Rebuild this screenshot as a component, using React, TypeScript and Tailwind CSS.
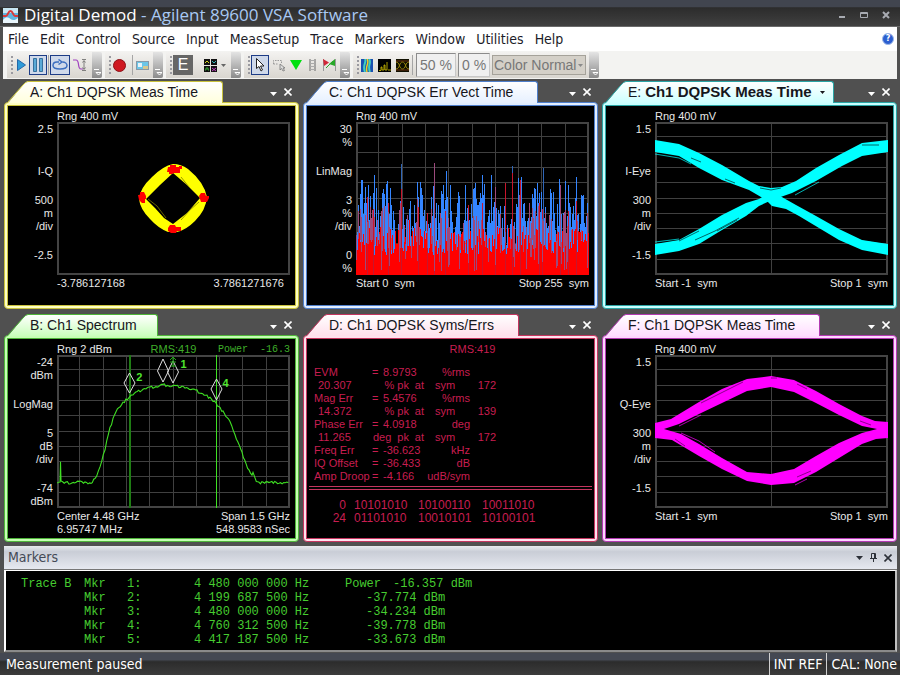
import clsx from "clsx";
import type { ReactNode } from "react";

const UI_FONT = "font-['DejaVu_Sans_Condensed','DejaVu_Sans',sans-serif]";
const PLOT_W = 233;
const PLOT_H = 153;

type Theme = { name: string; border: string; fill: string; tab: string; stroke: string; slope: string };

const themes: Record<string, Theme> = {
  yellow: { name: "yellow", border: "border-[#c9c23c]", fill: "bg-[#ffffc4]", tab: "from-white to-[#ffffdc]", stroke: "#d8d24a", slope: "#ffffdc" },
  blue: { name: "blue", border: "border-[#4f7fcb]", fill: "bg-[#e2eeff]", tab: "from-white to-[#e6f0ff]", stroke: "#4f7fcb", slope: "#e6f0ff" },
  cyan: { name: "cyan", border: "border-[#2aa5a5]", fill: "bg-[#c9ffff]", tab: "from-white to-[#ccffff]", stroke: "#2aa5a5", slope: "#ccffff" },
  green: { name: "green", border: "border-[#4fb53a]", fill: "bg-[#c6ffb4]", tab: "from-white to-[#c9ffbb]", stroke: "#4fb53a", slope: "#c9ffbb" },
  red: { name: "red", border: "border-[#c4355f]", fill: "bg-[#ffe2ee]", tab: "from-white to-[#ffe0ec]", stroke: "#c4355f", slope: "#ffe0ec" },
  magenta: { name: "magenta", border: "border-[#b23ab2]", fill: "bg-[#ffd6ff]", tab: "from-white to-[#ffdcff]", stroke: "#b23ab2", slope: "#ffdcff" },
};

/* ---------- trace panels ---------- */

const DownArrow = ({ className }: { className?: string }) => (
  <svg viewBox="0 0 7 4" className={clsx("h-[4px] w-[7px]", className)} fill="currentColor">
    <path d="M0 0h7L3.5 4z" />
  </svg>
);

const Cross = () => (
  <svg viewBox="0 0 8 8" className="size-2" stroke="currentColor" strokeWidth="1.6">
    <path d="M.5.5l7 7M7.5.5l-7 7" />
  </svg>
);

type PanelProps = { theme: Theme; title: ReactNode; label: string; pad?: string; children: ReactNode };

const Panel = ({ theme, title, label, pad = "pr-6", children }: PanelProps) => (
  <section aria-label={label} className="flex min-w-0 flex-col">
    <header className="flex h-[21px] items-start">
      <div className="relative z-10 flex h-[22px] pl-1">
        <svg viewBox="0 0 20 22" className="h-[22px] w-5">
          <linearGradient id={`slope-${theme.name}`} x1="0" x2="0" y1="0" y2="1">
            <stop offset="0" stopColor="#fff" />
            <stop offset="1" stopColor={theme.slope} />
          </linearGradient>
          <path d="M0 22L15 4Q18 .5 20 .5V22z" fill={`url(#slope-${theme.name})`} />
          <path d="M0 21L15 4Q18 .5 20 .5" fill="none" stroke={theme.stroke} />
        </svg>
        <h2 className={clsx("flex items-center gap-2 whitespace-nowrap rounded-tr-[3px] border-t border-r bg-linear-to-b pl-[2px] text-[14px] text-[#16161c]", pad, theme.border, theme.tab)}>
          {title}
        </h2>
      </div>
      <div className="ml-auto flex items-center gap-[7px] pt-[7px] pr-[7px] text-white">
        <button aria-label="Trace menu" className="pt-[4px]">
          <DownArrow />
        </button>
        <button aria-label="Close trace">
          <Cross />
        </button>
      </div>
    </header>
    <div className={clsx("flex-1 rounded-[4px] border p-[2px]", theme.border, theme.fill)}>
      <div className={clsx("h-full min-h-[201px] border bg-black", theme.border)}>{children}</div>
    </div>
  </section>
);

type PlotProps = {
  range: string;
  mid?: ReactNode;
  right?: ReactNode;
  axis: string[][];
  cols: number;
  rows: number;
  footer: [string, string][];
  overlay?: ReactNode;
  children: ReactNode;
};

const Plot = ({ range, mid, right, axis, cols, rows, footer, overlay, children }: PlotProps) => (
  <div className="grid grid-cols-[47px_1fr] gap-x-[2px] pr-[5px] text-[11px] leading-[13px] text-[#e8e8e8]">
    <div className="col-start-2 grid h-4 grid-cols-3 items-center pt-1 whitespace-nowrap">
      <span>{range}</span>
      <span className="text-center text-[#3fae2a]">{mid}</span>
      <span className="text-right font-['Liberation_Mono',monospace] text-[10px] text-[#3fae2a]">{right}</span>
    </div>
    <div className="col-start-1 flex h-[153px] flex-col justify-between pt-px pr-[2px] text-right">
      {axis.map((group, i) => (
        <div key={i} className={i === 0 || i === 3 ? "h-[26px]" : ""}>
          {group.map((line) => (
            <div key={line}>{line}</div>
          ))}
        </div>
      ))}
    </div>
    <div className="relative h-[153px]">
      <svg viewBox={`0 0 ${PLOT_W} ${PLOT_H}`} preserveAspectRatio="none" className="h-full w-full">
        <g stroke="#404040" shapeRendering="crispEdges">
          {Array.from({ length: cols - 1 }, (_, i) => {
            const x = Math.round((PLOT_W / cols) * (i + 1)) - 0.5;
            return <line key={i} x1={x} x2={x} y1="1" y2={PLOT_H - 1} />;
          })}
          {Array.from({ length: rows - 1 }, (_, i) => {
            const y = Math.round((PLOT_H / rows) * (i + 1)) - 0.5;
            return <line key={i} x1="1" x2={PLOT_W - 1} y1={y} y2={y} />;
          })}
        </g>
        <rect x="1" y="1" width={PLOT_W - 2} height={PLOT_H - 2} fill="none" stroke="#444" strokeWidth="2" />
        {children}
      </svg>
      {overlay}
    </div>
    <div className="col-start-2 pt-[2px]">
      {footer.map(([l, r]) => (
        <div key={l} className="flex justify-between whitespace-pre">
          <span>{l}</span>
          <span>{r}</span>
        </div>
      ))}
    </div>
  </div>
);

/* ---------- traces ---------- */

const Constellation = () => (
  <>
    <path
      fill="#ffff00"
      fillRule="evenodd"
      d="M116 42Q124 42 131 47Q147 60 150 75Q149 88 138 99Q129 108 120 110L111 110Q101 106 93 97Q83 87 82 77Q83 66 95 55Q106 44 116 42zM116 51L103 63 89 77 98 86 107 96 116 102 130 91 143 76 130 63z"
    />
    <g fill="none" stroke="#807c00" strokeWidth=".8">
      <path d="M124 55L132 65 141 74M91 77L100 84 109 96M124 98L133 88 142 80" />
    </g>
    <g fill="#ff0000">
      <path d="M111 45h2v-2h6v2h3v-1h3v3h-2v4h-6l-2 1h-3v-2h-2z" />
      <path d="M81 73h2v-3h4l2 4v3h-1v4h-3l-3-3z" />
      <path d="M142 74l2-3h4l1 3h3v2l-2 4h-6l-1-3z" />
      <path d="M111 106l2-3h5l1 2h5v4h-4l-1 2h-5l-3-2z" />
    </g>
  </>
);

// Tallest samples, [x, height]; everything between them is low-level noise.
const bluePeaks: [number, number][] = [
  [6, 95], [9, 88], [12, 90], [18, 100], [27, 86], [31, 94], [34, 87], [45, 111], [61, 93], [64, 93], [78, 112], [87, 90],
  [90, 104], [94, 90], [102, 83], [109, 90], [117, 86], [126, 100], [135, 100], [139, 88], [156, 109], [162, 97], [165, 98],
  [178, 87], [181, 92], [187, 107], [195, 82], [203, 96], [204, 90], [209, 94], [212, 90], [220, 98], [225, 80], [227, 80],
];
const redPeaks: [number, number][] = [
  [11, 78], [17, 66], [32, 72], [45, 86], [62, 68], [78, 87], [89, 64], [112, 70], [126, 72], [139, 87], [149, 92], [156, 102],
  [164, 95], [183, 72], [186, 66], [204, 68], [212, 64], [220, 74], [71, 62], [53, 55],
];

const noise = (() => {
  let seed = 89600;
  const rand = () => {
    seed = (seed * 1103515245 + 12345) % 2147483648;
    return seed / 2147483648;
  };
  const blue = new Map(bluePeaks);
  const red = new Map(redPeaks);
  return Array.from({ length: PLOT_W }, (_, x) => {
    const near = bluePeaks.some(([px]) => Math.abs(px - x) < 3) ? 16 : 0;
    const swell = 6 * Math.sin(x / 9) + 5 * Math.sin(x / 3.7) + near;
    const b = blue.get(x) ?? 30 + swell + rand() * 42;
    const r = red.get(x) ?? 20 + rand() * 28;
    const mixed = rand() < 0.4;
    return { x, b, r, p: mixed ? Math.min(b, r + 8 + rand() * 30) : 0, d: rand() < 0.25 ? 3 + rand() * 16 : 22 + rand() * 14 };
  });
})();

const ErrorVector = () => (
  <g shapeRendering="crispEdges">
    {noise.map(({ x, b, r, p, d }) => (
      <g key={x}>
        <rect x={x} y={PLOT_H - b} width="1" height={b} fill={b > 104 ? "#2f66b8" : "#3485ff"} />
        <rect x={x} y={PLOT_H - r} width="1" height={r} fill={r > 60 ? "#c8152c" : "#ff0000"} />
        {p > 0 && <rect x={x} y={PLOT_H - p} width="1" height={Math.max(p - d, 1)} fill="#9c4a7c" />}
      </g>
    ))}
  </g>
);

const IEye = () => (
  <>
    <g fill="#00ffff">
      <path d="M0 18L24 22 44 31 67 43 94 59 106 65 118 70 141 83 161 94 184 107 207 118 233 122V133L207 128 184 118 164 106 144 94 131 87 117 84 111 78 94 68 67 58 44 46 24 34 0 30z" />
      <path d="M0 122L24 118 44 107 67 93 91 81 104 77 116 70 127 65 141 59 161 46 184 33 207 21 233 18V30L207 34 187 44 161 59 137 71 117 78 104 84 91 94 67 108 44 122 24 129 0 133z" />
      <path d="M104 64L116 66 127 65 120 76 111 76z" />
    </g>
    <g fill="none" stroke="#003c3c" strokeWidth=".8">
      <path d="M105 66L116 68 126 66M36 36l10 4M70 57l10 4M40 118L60 109 84 96M62 109L82 98M24 119L44 109M207 23h17" />
    </g>
    <path d="M0 32L24 36 36 42M0 120L24 117M207 119L233 123M140 73L164 60" fill="none" stroke="#00ffff" strokeWidth=".7" />
  </>
);

const QEye = () => (
  <>
    <path
      fill="#ff00ff"
      fillRule="evenodd"
      d="M0 68L16 64 44 47 67 34 92 24 116 21 139 25 161 36 184 49 207 61 220 66 233 67V83L221 84 207 89 184 103 161 117 139 128 116 130 92 126 67 114 44 101 17 85 0 83zM9 74L24 69 44 59 67 48 92 36 116 32 139 37 161 48 184 60 207 71 222 74 207 78 184 88 161 101 139 114 116 119 92 117 67 103 44 89 26 79z"
    />
    <g fill="none" stroke="#5a005a" strokeWidth=".7">
      <path d="M46 48L70 36 88 27M142 29L152 34M205 66L216 70M142 122L156 116M20 84L30 91M116 23h6" />
    </g>
    <path d="M26 78L44 86 60 97M24 71L46 60M140 130L152 124" fill="none" stroke="#ff00ff" strokeWidth=".7" />
  </>
);

// Key points of the spectrum, filled in with ripple between them.
const spectrumKeys: [number, number][] = [
  [0, 128], [3, 126], [3.5, 107], [4, 127], [12, 128], [22, 127], [34, 128], [38, 124], [43, 113], [48, 94], [53, 73],
  [59, 56], [66, 48], [73, 41], [86, 34], [96, 32], [106, 30], [116, 31], [128, 32], [140, 36], [150, 41], [159, 48],
  [166, 57], [173, 66], [178, 80], [185, 98], [192, 116], [195, 121], [196, 117], [198, 124], [202, 128], [212, 127],
  [222, 128], [233, 127],
];

const spectrum = (() => {
  const ripple = [0, 0.8, -0.9, 0.3, -0.6, 1, -0.2, -1.1, 0.6, 1.2, -0.4];
  const pts: string[] = [];
  spectrumKeys.slice(1).forEach(([x1, y1], i) => {
    const [x0, y0] = spectrumKeys[i];
    const steps = Math.max(1, Math.round((x1 - x0) / 1.5));
    for (let s = 0; s < steps; s++) {
      const x = x0 + ((x1 - x0) * s) / steps;
      const y = y0 + ((y1 - y0) * s) / steps + ripple[Math.round(x * 1.7) % ripple.length];
      pts.push(`${x.toFixed(1)},${y.toFixed(1)}`);
    }
  });
  return pts.join(" ");
})();

const Spectrum = () => (
  <>
    <g shapeRendering="crispEdges">
      <path d="M73 0V153" stroke="#1f7d14" strokeWidth="2" />
      <path d="M159.5 0V153" stroke="#3fe023" />
    </g>
    <polyline points={spectrum} fill="none" stroke="#3fe023" strokeWidth="1.1" />
    <g fill="none" stroke="#e0e0e0">
      <path d="M72.500 18L78 28 72.500 38 67 28z" />
      <path d="M106 4L111.500 16 106 27 100.500 16z" />
      <path d="M116 6L121.500 17 116 28 110.500 17z" />
      <path d="M159.500 24L165 34 159.500 45 154 34z" />
    </g>
    <path d="M116 12V2M113 5L116 2 119 5M113 7h6M114 11h5" fill="none" stroke="#22a516" />
  </>
);

const SpectrumLabels = () => (
  <div className="font-bold text-[#4fe62e]">
    <span className="absolute top-[3px] left-[53%]">1</span>
    <span className="absolute top-[16px] left-[34%]">2</span>
    <span className="absolute top-[22px] left-[71%]">4</span>
  </div>
);

/* ---------- symbols / errors ---------- */

const errorRows = [
  ["EVM", "8.9793", "%rms", "20.307", "% pk", "172"],
  ["Mag Err", "5.4576", "%rms", "14.372", "% pk", "139"],
  ["Phase Err", "4.0918", "deg", "11.265", "deg  pk", "172"],
  ["Freq Err", "-36.623", "kHz"],
  ["IQ Offset", "-36.433", "dB"],
  ["Amp Droop", "-4.166", "udB/sym"],
];

const SymsErrs = () => (
  <div className="text-[11px] leading-[13px] text-[#c81e50]">
    <div className="h-4 pt-1 pl-11 text-center">RMS:419</div>
    <table className="mt-[11px] ml-[7px] w-[182px] table-fixed whitespace-pre">
      <colgroup>
        <col className="w-[58px]" />
        <col className="w-[11px]" />
        <col className="w-[26px]" />
        <col className="w-[15px]" />
        <col className="w-[46px]" />
        <col className="w-[26px]" />
      </colgroup>
      <tbody>
        {errorRows.flatMap(([name, value, unit, peak, peakUnit, sym]) => [
          <tr key={name}>
            <th scope="row" className="p-0 text-left font-normal">{name}</th>
            <td className="p-0">=</td>
            <td colSpan={2} className="p-0">{value}</td>
            <td className="p-0 text-right">{unit}</td>
            <td />
          </tr>,
          peak && (
            <tr key={name + "-peak"}>
              <td className="p-0 pl-1">{peak}</td>
              <td colSpan={2} className="p-0 text-right">{peakUnit}</td>
              <td className="p-0 text-right">at</td>
              <td className="p-0 pl-[11px]">sym</td>
              <td className="p-0 text-right">{sym}</td>
            </tr>
          ),
        ])}
      </tbody>
    </table>
    <div className="mx-[2px] mt-[3px] h-[4px] border-y border-[#c4355f]" />
    <table className="mt-[9px] ml-[20px] text-[12px] leading-[13px]">
      <tbody>
        {["0 10101010 10100110 10011010", "24 01101010 10010101 10100101"].map((row) => (
          <tr key={row}>
            {row.split(" ").map((word, i) => (
              <td key={word} className={i === 0 ? "w-[27px] p-0 pr-2 text-right" : "w-16 min-w-16 p-0"}>
                {word}
              </td>
            ))}
          </tr>
        ))}
      </tbody>
    </table>
  </div>
);

/* ---------- toolbar ---------- */

const ToolGroup = ({ label, children }: { label: string; children: ReactNode }) => (
  <div role="group" aria-label={label} className="flex h-[26px] items-stretch rounded-r-[2px] bg-linear-to-b from-[#f3f2f0] to-[#d9d6d0]">
    <div className="my-1 mr-px ml-1 w-[2px] border-l-2 border-dotted border-[#9a9aa0]" />
    <div className="flex items-center">{children}</div>
    <button aria-label={`${label} options`} className="ml-[3px] flex w-[10px] items-end justify-center rounded-r-[2px] bg-linear-to-b from-[#e4e4e4] to-[#8c8c8c] pb-[2px] text-white">
      <svg viewBox="0 0 8 7" className="h-[7px] w-2" stroke="currentColor" fill="none">
        <path d="M1 .5h5M3 3.500h5L5.500 6z" />
      </svg>
    </button>
  </div>
);

const ToolButton = ({ label, on, className, children }: { label: string; on?: boolean; className?: string; children: ReactNode }) => (
  <button
    aria-label={label}
    className={clsx("flex h-5 items-center justify-center", on && "border border-[#1d3c86] bg-[#cfd9ea]", className)}>
    {children}
  </button>
);

const Separator = () => <div className="mx-[1px] h-5 w-px bg-[#a5a5a5]" />;

const Toolbar = () => (
  <div className="flex h-7 items-center gap-[3px] bg-[#f3f3f1] pl-1">
    <ToolGroup label="Measurement">
      <ToolButton label="Run" className="w-[15px]">
        <svg viewBox="0 0 9 12" className="h-3 w-[9px]">
          <path d="M.5.5L8.500 6 .5 11.500z" fill="#2f9bd8" stroke="#2468a8" />
        </svg>
      </ToolButton>
      <ToolButton label="Pause" on className="w-[18px]">
        <svg viewBox="0 0 10 14" className="h-[14px] w-[10px]" fill="#5aa9d6" stroke="#1e5c8c" strokeWidth=".8">
          <path d="M.5.5h3v13h-3zM6.500.5h3v13h-3z" />
        </svg>
      </ToolButton>
      <Separator />
      <ToolButton label="Single" on className="w-5">
        <svg viewBox="0 0 16 12" className="h-3 w-4" fill="none" stroke="#3d6fc0" strokeWidth="1.500">
          <path d="M7 3H5C2.500 3 1 4.500 1 6.500S3 10 8 10s7-1.500 7-3.500S13 3 10.500 3" />
          <path d="M6.500.5L10 3 6.500 5.500" />
        </svg>
      </ToolButton>
      <ToolButton label="Trigger" className="w-[19px]">
        <svg viewBox="0 0 14 14" className="size-[14px]" fill="none">
          <path d="M0 2h3c4 0 1 9 5 9h2" stroke="#a040c0" strokeWidth="1.200" />
          <path d="M9 1.500h4M9 12.500h4M11 3v8M9.500 4.500L11 2.500l1.500 2M9.500 9.500l1.500 2 1.500-2" stroke="#666" strokeWidth=".8" />
        </svg>
      </ToolButton>
    </ToolGroup>
    <ToolGroup label="Recording">
      <ToolButton label="Record" className="w-[15px]">
        <span className="size-[13px] rounded-full border border-[#8c1016] bg-[#cf1820]" />
      </ToolButton>
      <span className="w-1" />
      <Separator />
      <ToolButton label="Player" className="w-4">
        <svg viewBox="0 0 13 9" className="h-[9px] w-[13px]">
          <rect x=".5" y=".5" width="12" height="8" fill="#6cc6e8" stroke="#8899a8" />
          <rect x="2" y="2" width="4" height="4" fill="#e8f4fa" />
          <rect x="7" y="5" width="5" height="3" fill="#d8c890" />
        </svg>
      </ToolButton>
    </ToolGroup>
    <ToolGroup label="Traces">
      <ToolButton label="Equalizer" className="mr-2 w-5 bg-[#666] text-[16px] text-white">
        E
      </ToolButton>
      <ToolButton label="Layout" className="w-[27px] gap-1 text-[#666]">
        <svg viewBox="0 0 13 13" className="size-[13px] shrink-0">
          <path d="M0 0h6v6H0zM7 0h6v6H7zM0 7h6v6H0zM7 7h6v6H7z" fill="#111" />
          <path d="M1 4l2-2 2 2" stroke="#d8d820" fill="none" />
          <path d="M8 2l2 2 2-2" stroke="#2fb6b6" fill="none" />
          <path d="M1 11h1V9h2v2h1" stroke="#35b035" fill="none" />
          <path d="M8 9l4 3M12 9l-4 3" stroke="#c040c0" fill="none" />
        </svg>
        <svg viewBox="0 0 5 3" className="h-[3px] w-[5px] shrink-0" fill="currentColor">
          <path d="M0 0h5L2.500 3z" />
        </svg>
      </ToolButton>
    </ToolGroup>
    <ToolGroup label="Cursor">
      <ToolButton label="Pointer" on className="w-[18px]">
        <svg viewBox="0 0 9 14" className="h-[14px] w-[9px]" fill="#fff" stroke="#222">
          <path d="M.5.5v10L3 8.500l2 4.500 1.500-1L4.500 8H8z" />
        </svg>
      </ToolButton>
      <ToolButton label="Area select" className="w-5">
        <svg viewBox="0 0 13 13" className="size-[13px]" fill="none">
          <path d="M.5 5V1.500h8V5M.5 5h5" stroke="#999" strokeDasharray="1.500 1" />
          <path d="M7 5v6l1.500-1.500L10 12l1.500-.5L10 9h2z" fill="#ddd" stroke="#777" strokeWidth=".8" />
        </svg>
      </ToolButton>
      <ToolButton label="Marker" className="w-[14px]">
        <svg viewBox="0 0 12 10" className="h-[10px] w-3">
          <path d="M0 0h12L6 10z" fill="#00e010" />
        </svg>
      </ToolButton>
      <ToolButton label="Band" className="w-[18px]">
        <svg viewBox="0 0 7 12" className="h-3 w-[7px]" fill="none" stroke="#666">
          <path d="M1 0v12M6 0v12" />
          <path d="M1 1.500h5M1 4.500h5M1 7.500h5M1 10.500h5" stroke="#aaa" />
        </svg>
      </ToolButton>
      <ToolButton label="Offset" className="w-4">
        <svg viewBox="0 0 13 12" className="h-3 w-[13px]">
          <path d="M.5 0v12M12.500 0v12" stroke="#999" />
          <path d="M0 0l6 3.500L1 7z" fill="#d02838" />
          <path d="M12 0v7L6 5z" fill="#28a828" />
          <path d="M3 9l7-7" stroke="#28a828" />
        </svg>
      </ToolButton>
    </ToolGroup>
    <ToolGroup label="Display">
      <ToolButton label="Spectrogram" className="w-[13px]">
        <svg viewBox="0 0 12 13" className="h-[13px] w-3" fill="none">
          <path d="M0 0h12v13H0z" fill="#1a50b0" />
          <path d="M4 0c2 4-3 5 0 13M8 0c3 4-2 6 1 13" stroke="#40d0c0" strokeWidth="2" />
          <path d="M6 0c3 4-2 6 0 13" stroke="#f0d020" strokeWidth="1.500" />
        </svg>
      </ToolButton>
      <ToolButton label="Persistence" className="w-[22px]">
        <svg viewBox="0 0 13 13" className="size-[13px]" fill="none" stroke="#d8c800">
          <path d="M0 0h13v13H0z" fill="#000" stroke="none" />
          <path d="M1 11.500h2V8h1v3h2V6h1v5h2V3M10 11h3" strokeWidth=".8" />
        </svg>
      </ToolButton>
      <ToolButton label="Eye density" className="w-[14px]">
        <svg viewBox="0 0 13 13" className="size-[13px]" fill="none">
          <path d="M0 0h13v13H0z" fill="#101000" />
          <path d="M0 3c4 0 3 7 6.500 7S9 3 13 3M0 10c4 0 3-7 6.500-7S9 10 13 10" stroke="#b8a010" strokeWidth=".8" />
          <path d="M0 2h13M0 11h13" stroke="#a04018" strokeWidth=".6" />
        </svg>
      </ToolButton>
      <span className="w-[2px]" />
      <Separator />
      <input aria-label="Persistence level" disabled defaultValue="50 %" className="ml-[2px] h-6 w-10 border border-[#c8c8c8] border-t-[#8c8c8c] border-l-[#8c8c8c] bg-[#f0f0f0] pl-[3px] text-[14px] text-[#777]" />
      <input aria-label="Threshold" disabled defaultValue="0 %" className="ml-[2px] h-6 w-8 border border-[#c8c8c8] border-t-[#8c8c8c] border-l-[#8c8c8c] bg-[#f0f0f0] pl-[3px] text-[14px] text-[#777]" />
      <div className="relative ml-[2px] flex items-center text-[#8a8a8a]">
        <select aria-label="Color map" disabled className="h-5 w-[94px] appearance-none border border-[#a5a29a] bg-[#d4d0c8] pl-[1px] text-[14px] leading-[18px] text-[#777] opacity-100">
          <option>Color Normal</option>
        </select>
        <svg viewBox="0 0 5 3" className="absolute right-[3px] h-[3px] w-[5px]" fill="currentColor">
          <path d="M0 0h5L2.500 3z" />
        </svg>
      </div>
    </ToolGroup>
  </div>
);

/* ---------- markers ---------- */

const markers = [
  { trace: "Trace B", id: "1:", freq: "4 480 000 000 Hz", name: "Power", level: "-16.357 dBm" },
  { id: "2:", freq: "4 199 687 500 Hz", level: "-37.774 dBm" },
  { id: "3:", freq: "4 480 000 000 Hz", level: "-34.234 dBm" },
  { id: "4:", freq: "4 760 312 500 Hz", level: "-39.778 dBm" },
  { id: "5:", freq: "4 417 187 500 Hz", level: "-33.673 dBm" },
];

const Markers = () => (
  <section aria-label="Markers">
    <header className={clsx("flex h-6 items-center border-b border-[#777] bg-linear-to-b from-[#e8eaee] via-[#c9cdd6] via-25% to-[#e6e9f0] pr-[5px] pl-1 text-[#444a56]", UI_FONT)}>
      <h2 className="text-[14px]">Markers</h2>
      <div className="ml-auto flex items-center gap-[7px] text-[#2c3038]">
        <button aria-label="Panel menu">
          <DownArrow />
        </button>
        <button aria-label="Pin panel">
          <svg viewBox="0 0 7 9" className="h-[9px] w-[7px]" fill="none" stroke="currentColor">
            <path d="M1.500 5.500v-5h4v5M4.500 1v4M0 5.500h7M3.500 6v3" />
          </svg>
        </button>
        <button aria-label="Close panel">
          <Cross />
        </button>
      </div>
    </header>
    <div className="border-2 border-t-[1px] border-white border-r-[#c0c0c0] border-b-[#8a8a8a] bg-black pt-[6px] pb-[3px] pl-[15px] font-['Liberation_Mono',monospace] text-[12px] leading-[14px] text-[#46cc30]">
      <table className="whitespace-pre">
        <tbody>
          {markers.map((m) => (
            <tr key={m.id}>
              <td className="w-[63px] p-0">{m.trace}</td>
              <td className="w-[43px] p-0">Mkr</td>
              <td className="w-[67px] p-0">{m.id}</td>
              <td className="w-[151px] p-0">{m.freq}</td>
              {m.name ? (
                <td className="p-0">
                  {m.name}
                  <span className="pl-3">{m.level}</span>
                </td>
              ) : (
                <td className="p-0 pl-[21px]">{m.level}</td>
              )}
            </tr>
          ))}
        </tbody>
      </table>
    </div>
  </section>
);

/* ---------- window ---------- */

const menus = ["File", "Edit", "Control", "Source", "Input", "MeasSetup", "Trace", "Markers", "Window", "Utilities", "Help"];

const TitleBar = () => (
  <header className="flex h-[27px] items-center border-b border-[#6a6a6a] bg-linear-to-b from-[#41454f] from-25% via-[#2c2c2c] via-30% to-[#404040] px-[3px] pt-1">
    <svg viewBox="0 0 15 15" className="size-[15px]">
      <path d="M0 0h15v15H0z" fill="#5fb4e0" />
      <path d="M0 0h15v5H0z" fill="#c8e6f4" />
      <path d="M0 8h3c2 0 2-5 4.500-5S10 8 12 8h3" fill="none" stroke="#d83a3a" strokeWidth="2" />
      <path d="M0 12c3-4 5-3 7.500-1s5 1 7.500-1v5H0z" fill="#e9f5fb" />
    </svg>
    <h1 className="ml-[6px] font-['Open_Sans','Noto_Sans',sans-serif] text-[17px] leading-5 text-[#a9c9f4]">
      <span className="text-white">Digital Demod</span> - Agilent 89600 VSA Software
    </h1>
    <div className="ml-auto flex items-center gap-[14px] pr-[7px] text-[#a8abb2]">
      <button aria-label="Minimize">
        <svg viewBox="0 0 8 8" className="size-2" fill="currentColor">
          <path d="M1 5h6v2H1z" />
        </svg>
      </button>
      <button aria-label="Maximize">
        <svg viewBox="0 0 8 8" className="size-2" fill="none" stroke="currentColor">
          <path d="M.5 1.500h7v5h-7zM.5 2.500h7" />
        </svg>
      </button>
      <button aria-label="Close">
        <svg viewBox="0 0 8 8" className="size-2" stroke="currentColor" strokeWidth="2">
          <path d="M1 1l6 6M7 1L1 7" />
        </svg>
      </button>
    </div>
  </header>
);

const App = () => (
  <div className="flex min-h-screen flex-col bg-[#505050] font-['Liberation_Sans',Arial,sans-serif]">
    <TitleBar />
    <div className="mr-[3px] ml-[3px]">
      <nav className={clsx("flex h-6 items-center bg-white pr-[3px] pl-[5px] text-[14px] text-[#1c1c28]", UI_FONT)}>
        <div className="flex gap-[11px]">
          {menus.map((m) => (
            <button key={m}>{m}</button>
          ))}
        </div>
        <button aria-label="Help topics" className="ml-auto flex size-3 items-center justify-center rounded-full border border-[#9db8e8] bg-[#2c5fd0] text-[9px] font-bold text-white">
          ?
        </button>
      </nav>
      <Toolbar />
    </div>
    <main className="grid flex-1 grid-cols-3 gap-x-1 gap-y-[5px] pt-[2px] pr-[3px] pb-1 pl-1">
      <Panel theme={themes.yellow} label="Trace A" title="A: Ch1 DQPSK Meas Time">
        <Plot range="Rng 400 mV" axis={[["2.5"], ["I-Q"], ["500", "m", "/div"], ["-2.5"]]} cols={1} rows={1} footer={[["-3.786127168", "3.7861271676  "]]}>
          <Constellation />
        </Plot>
      </Panel>
      <Panel theme={themes.blue} label="Trace C" title="C: Ch1 DQPSK Err Vect Time">
        <Plot range="Rng 400 mV" axis={[["30", "%"], ["LinMag"], ["3", "%", "/div"], ["0", "%"]]} cols={10} rows={10} footer={[["Start 0  sym", "Stop 255  sym"]]}>
          <ErrorVector />
        </Plot>
      </Panel>
      <Panel
        theme={themes.cyan}
        label="Trace E"
        pad="pr-2"
        title={
          <>
            <span>
              E: <b className="text-[15px]">Ch1 DQPSK Meas Time</b>
            </span>
            <svg viewBox="0 0 5 3" className="h-[3px] w-[5px]" fill="currentColor">
              <path d="M0 0h5L2.500 3z" />
            </svg>
          </>
        }>
        <Plot range="Rng 400 mV" axis={[["1.5"], ["I-Eye"], ["300", "m", "/div"], ["-1.5"]]} cols={2} rows={10} footer={[["Start -1  sym", "Stop 1  sym"]]}>
          <IEye />
        </Plot>
      </Panel>
      <Panel theme={themes.green} label="Trace B" pad="pr-5" title="B: Ch1 Spectrum">
        <Plot
          range="Rng 2 dBm"
          mid="RMS:419"
          right={<span className="whitespace-pre">Power  -16.3</span>}
          axis={[["-24", "dBm"], ["LogMag"], ["5", "dB", "/div"], ["-74", "dBm"]]}
          cols={10}
          rows={10}
          footer={[["Center 4.48 GHz", "Span 1.5 GHz"], ["6.95747 MHz", "548.9583 nSec"]]}
          overlay={<SpectrumLabels />}>
          <Spectrum />
        </Plot>
      </Panel>
      <Panel theme={themes.red} label="Trace D" title="D: Ch1 DQPSK Syms/Errs">
        <SymsErrs />
      </Panel>
      <Panel theme={themes.magenta} label="Trace F" title="F: Ch1 DQPSK Meas Time">
        <Plot range="Rng 400 mV" axis={[["1.5"], ["Q-Eye"], ["300", "m", "/div"], ["-1.5"]]} cols={2} rows={10} footer={[["Start -1  sym", "Stop 1  sym"]]}>
          <QEye />
        </Plot>
      </Panel>
    </main>
    <div className="pr-[3px] pl-1">
      <Markers />
    </div>
    <footer className={clsx("mt-px flex h-[22px] items-stretch bg-linear-to-b from-[#444852] from-30% via-[#2c2c2c] via-40% to-[#3c3c3c] pr-[3px] pl-[6px] text-[14px] leading-[22px] text-white", UI_FONT)}>
      <span className="mr-auto">Measurement paused</span>
      <span className="border-l border-[#d0d0d0] px-1">INT REF</span>
      <span className="border-l border-[#d0d0d0] pl-1">CAL: None</span>
    </footer>
  </div>
);

export default App;
